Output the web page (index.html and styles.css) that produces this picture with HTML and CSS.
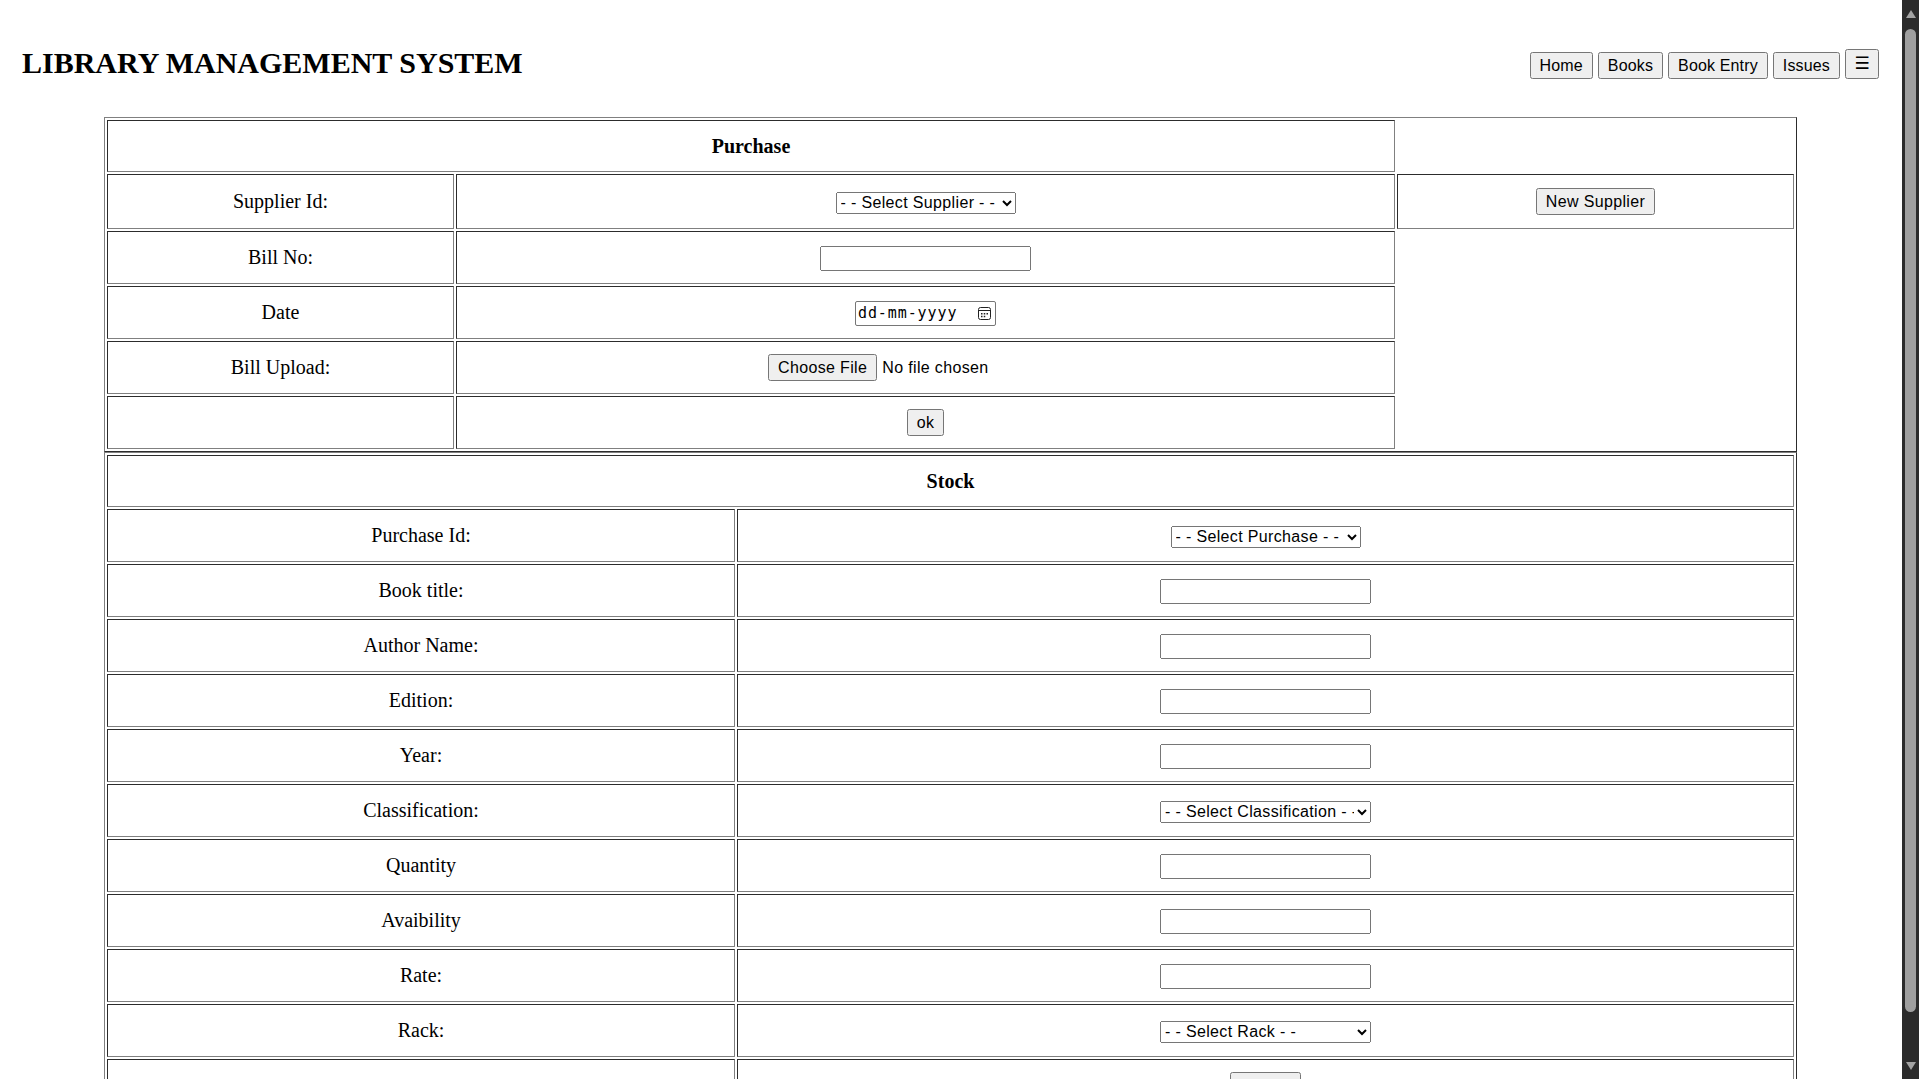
FILE: index.html
```html
<!DOCTYPE html>
<html lang="en">
<head>
<meta charset="utf-8">
<title>Library Management System</title>
<link rel="stylesheet" href="styles.css">
</head>
<body>
<header class="topbar">
  <h1 class="brand">LIBRARY MANAGEMENT SYSTEM</h1>
  <nav class="nav">
    <button class="btn nav-btn" type="button">Home</button>
    <button class="btn nav-btn" type="button">Books</button>
    <button class="btn nav-btn" type="button">Book Entry</button>
    <button class="btn nav-btn" type="button">Issues</button>
    <button class="btn btn-menu" type="button">☰</button>
  </nav>
</header>

<table class="grid">
  <colgroup><col class="p-c1"><col class="p-c2"><col></colgroup>
  <tr><th colspan="2">Purchase</th></tr>
  <tr class="row-tall">
    <td>Supplier Id:</td>
    <td><select class="sel sel-supplier"><option>- - Select Supplier - -</option></select></td>
    <td><button class="btn" type="button">New Supplier</button></td>
  </tr>
  <tr><td>Bill No:</td><td><input class="field" type="text"></td></tr>
  <tr>
    <td>Date</td>
    <td><span class="date"><span class="date-text">dd-mm-yyyy</span><svg class="cal" width="13" height="13" viewBox="0 0 13 13"><rect x="0.5" y="0.5" width="12" height="12" rx="2" fill="none" stroke="#222" stroke-width="1"/><line x1="0.5" y1="3.5" x2="12.5" y2="3.5" stroke="#222" stroke-width="1"/><rect x="3" y="6" width="1.5" height="1.5" fill="#222"/><rect x="5.75" y="6" width="1.5" height="1.5" fill="#222"/><rect x="8.5" y="6" width="1.5" height="1.5" fill="#222"/><rect x="3" y="8.75" width="1.5" height="1.5" fill="#222"/><rect x="5.75" y="8.75" width="1.5" height="1.5" fill="#222"/></svg></span></td>
  </tr>
  <tr>
    <td>Bill Upload:</td>
    <td><span class="file"><button class="btn" type="button">Choose File</button><span class="file-name">No file chosen</span></span></td>
  </tr>
  <tr><td></td><td><button class="btn" type="button">ok</button></td></tr>
</table>

<table class="grid">
  <colgroup><col class="s-c1"><col></colgroup>
  <tr><th colspan="2">Stock</th></tr>
  <tr><td>Purchase Id:</td><td><select class="sel sel-purchase"><option>- - Select Purchase - -</option></select></td></tr>
  <tr><td>Book title:</td><td><input class="field" type="text"></td></tr>
  <tr><td>Author Name:</td><td><input class="field" type="text"></td></tr>
  <tr><td>Edition:</td><td><input class="field" type="text"></td></tr>
  <tr><td>Year:</td><td><input class="field" type="text"></td></tr>
  <tr><td>Classification:</td><td><select class="sel sel-wide"><option>- - Select Classification - -</option></select></td></tr>
  <tr><td>Quantity</td><td><input class="field" type="text"></td></tr>
  <tr><td>Avaibility</td><td><input class="field" type="text"></td></tr>
  <tr><td>Rate:</td><td><input class="field" type="text"></td></tr>
  <tr><td>Rack:</td><td><select class="sel sel-wide"><option>- - Select Rack - -</option></select></td></tr>
  <tr><td></td><td><button class="btn" type="button">Submit</button></td></tr>
</table>

<div class="vscroll" aria-hidden="true">
  <span class="vscroll-arrow vscroll-up"></span>
  <span class="vscroll-thumb"></span>
  <span class="vscroll-arrow vscroll-down"></span>
</div>
</body>
</html>
```

FILE: styles.css
```css
html {
  background: #fff;
  padding-right: 17px;
}

body {
  margin: 8px;
  font-family: "Liberation Serif", "Times New Roman", serif;
  color: #000;
}

.topbar {
  display: flex;
  justify-content: space-between;
  align-items: center;
  padding: 17.5px 15px 17.5px 14px;
}

.brand {
  font-size: 30px;
  font-weight: bold;
  margin: 20.1px 0;
}

.nav {
  display: flex;
  align-items: flex-end;
  gap: 5px;
  margin-top: 2px;
}

.btn {
  font-family: "Liberation Sans", Arial, sans-serif;
  font-size: 16px;
  letter-spacing: 0.35px;
  line-height: 19px;
  padding: 2px 8px;
  color: #000;
}

.nav-btn {
  letter-spacing: 0.15px;
}

.btn-menu {
  width: 34px;
  height: 30px;
  padding: 0;
  letter-spacing: 0;
  font-family: "DejaVu Sans", sans-serif;
  font-size: 17px;
}

.grid {
  width: 1693px;
  margin-left: 96px;
  table-layout: fixed;
  border-collapse: separate;
  border-spacing: 2px;
  border: 1px outset gray;
  font-size: 20px;
}

.grid td,
.grid th {
  height: 53px;
  box-sizing: border-box;
  border: 1px inset gray;
  padding: 1px;
  text-align: center;
  vertical-align: middle;
}

.grid th {
  height: 52px;
  font-weight: bold;
}

.grid .row-tall td {
  height: 55px;
}

.p-c1 { width: 347px; }
.p-c2 { width: 939px; }
.s-c1 { width: 628px; }

.field {
  width: 211px;
  height: 25px;
  box-sizing: border-box;
  font-family: "Liberation Sans", Arial, sans-serif;
  font-size: 16px;
  vertical-align: middle;
}

.sel {
  height: 22px;
  box-sizing: border-box;
  font-family: "Liberation Sans", Arial, sans-serif;
  font-size: 16px;
  letter-spacing: 0.35px;
  color: #000;
  vertical-align: middle;
}

.sel-supplier { width: 180px; }
.sel-purchase { width: 190px; }
.sel-wide { width: 211px; }

.date {
  display: inline-flex;
  align-items: center;
  justify-content: space-between;
  width: 141px;
  height: 25px;
  box-sizing: border-box;
  border: 1px solid #767676;
  border-radius: 2px;
  padding: 0 4px 0 2px;
  vertical-align: middle;
  background: #fff;
}

.date-text {
  font-family: "DejaVu Sans Mono", monospace;
  font-size: 15px;
  letter-spacing: 0.9px;
  color: #000;
}

.cal {
  display: block;
}

.file {
  display: inline-flex;
  align-items: center;
  gap: 5px;
  width: 315px;
  vertical-align: middle;
}

.file-name {
  font-family: "Liberation Sans", Arial, sans-serif;
  font-size: 16px;
  letter-spacing: 0.35px;
}

/* replica of the dark window scrollbar seen in the screenshot */
.vscroll {
  position: fixed;
  top: 0;
  right: 0;
  bottom: 0;
  width: 17px;
  background: #2b2b2b;
  display: flex;
  flex-direction: column;
  align-items: center;
  padding: 10px 0 9px;
  box-sizing: border-box;
}

.vscroll-arrow {
  width: 0;
  height: 0;
  border-left: 5px solid transparent;
  border-right: 5px solid transparent;
}

.vscroll-up {
  border-bottom: 8px solid #a3a3a3;
}

.vscroll-down {
  margin-top: auto;
  border-top: 8px solid #a3a3a3;
}

.vscroll-thumb {
  width: 11px;
  height: 983px;
  margin-top: 11px;
  border-radius: 6px;
  background: #9f9f9f;
}
```
